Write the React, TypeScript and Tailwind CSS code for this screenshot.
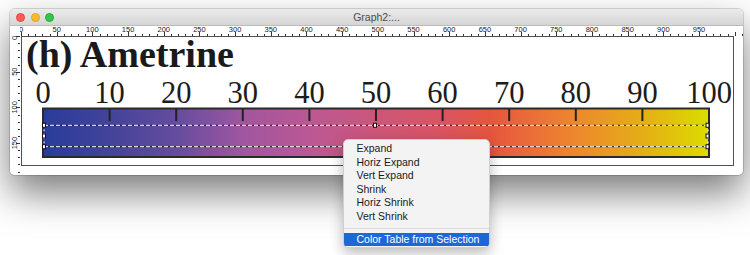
import React from "react";

const RULER_SCALE = 0.7137;

function TopRuler() {
  const minor: number[] = [];
  for (let v = 0; v <= 1010; v += 10) minor.push(v);
  const labels: number[] = [];
  for (let v = 0; v <= 950; v += 50) labels.push(v);
  return (
    <svg width={723} height={10} className="block">
      {minor.map((v) => {
        const x = 1 + v * RULER_SCALE;
        const major = v % 50 === 0;
        return (
          <rect
            key={v}
            x={Math.round(x)}
            y={major ? 6 : 8}
            width={1}
            height={major ? 4 : 2}
            fill="#333"
          />
        );
      })}
      {labels.map((v) => (
        <text
          key={v}
          x={1 + v * RULER_SCALE}
          y={6}
          textAnchor="middle"
          fontSize={7.5}
          fill="#222"
          fontFamily="Liberation Sans, Arial, sans-serif"
        >
          {v}
        </text>
      ))}
    </svg>
  );
}

function LeftRuler() {
  const minor: number[] = [];
  for (let v = 0; v <= 190; v += 10) minor.push(v);
  const labels = [0, 50, 100, 150];
  return (
    <svg width={10} height={139} className="block">
      {minor.map((v) => {
        const y = v * RULER_SCALE;
        const major = v % 50 === 0;
        return (
          <rect
            key={v}
            x={major ? 6 : 8}
            y={Math.round(y)}
            width={major ? 4 : 2}
            height={1}
            fill="#333"
          />
        );
      })}
      {labels.map((v) => {
        const y = v * RULER_SCALE + (v === 0 ? 2 : 0);
        return (
          <text
            key={v}
            x={0}
            y={0}
            transform={`translate(6.5 ${y}) rotate(-90)`}
            textAnchor="middle"
            fontSize={7.5}
            fill="#222"
            fontFamily="Liberation Sans, Arial, sans-serif"
          >
            {v}
          </text>
        );
      })}
    </svg>
  );
}

function ColorBar() {
  const x0 = 21;
  const barW = 666;
  const step = barW / 10;
  const labels = [0, 10, 20, 30, 40, 50, 60, 70, 80, 90, 100];
  const stops: [number, string][] = [
    [0, "#283c9a"],
    [0.1, "#434499"],
    [0.2, "#654c9e"],
    [0.3, "#a056a0"],
    [0.4, "#bb5894"],
    [0.5, "#cc5679"],
    [0.6, "#da5462"],
    [0.67, "#e5553e"],
    [0.72, "#e9683a"],
    [0.8, "#ed882d"],
    [0.9, "#e4ae16"],
    [1, "#dcdc00"],
  ];
  const handles: [number, number][] = [
    [22, 53.3],
    [22, 64],
    [22, 74.7],
    [353, 53.3],
    [685.5, 53.3],
    [685.5, 64],
    [685.5, 74.7],
  ];
  return (
    <svg width={710} height={92} className="block">
      <defs>
        <linearGradient id="ametrine" x1="0" y1="0" x2="1" y2="0">
          {stops.map(([o, c]) => (
            <stop key={o} offset={o} stopColor={c} />
          ))}
        </linearGradient>
      </defs>
      {labels.map((v, i) => (
        <text
          key={v}
          x={x0 + i * step}
          y={31.3}
          textAnchor="middle"
          fontSize={30.5}
          fill="#1c1c1c"
          fontFamily="Liberation Serif, Times New Roman, serif"
        >
          {v}
        </text>
      ))}
      <rect
        x={x0}
        y={36.5}
        width={barW}
        height={48.5}
        fill="url(#ametrine)"
        stroke="#2a2a2a"
        strokeWidth={2}
      />
      {labels.slice(1, 10).map((v, i) => (
        <rect
          key={v}
          x={x0 + (i + 1) * step - 1}
          y={37}
          width={2}
          height={12}
          fill="#222"
        />
      ))}
      {[53.3, 74.7].map((y) => (
        <g key={y}>
          <line x1={x0 + 1} y1={y} x2={x0 + barW - 1} y2={y} stroke="#222" strokeWidth={1} />
          <line
            x1={x0 + 1}
            y1={y}
            x2={x0 + barW - 1}
            y2={y}
            stroke="#fff"
            strokeWidth={1}
            strokeDasharray="4 2"
          />
        </g>
      ))}
      <line x1={x0 + 1} y1={53.3} x2={x0 + 1} y2={74.7} stroke="#fff" strokeWidth={1} strokeDasharray="2 2" />
      <line x1={x0 + barW - 1} y1={53.3} x2={x0 + barW - 1} y2={74.7} stroke="#fff" strokeWidth={1} strokeDasharray="2 2" />
      {handles.map(([x, y], i) => (
        <rect
          key={i}
          x={x - 1.5}
          y={y - 2}
          width={3}
          height={4}
          fill="#fff"
          stroke="#111"
          strokeWidth={1}
        />
      ))}
    </svg>
  );
}

const menuItems = ["Expand", "Horiz Expand", "Vert Expand", "Shrink", "Horiz Shrink", "Vert Shrink"];

export default function App() {
  return (
    <div className="w-[750px] h-[255px] bg-white overflow-hidden relative font-['Liberation_Sans',Arial,sans-serif]">
      <div className="pl-[10px] pt-[9px]">
        <div className="w-[733px] h-[166px] bg-white rounded-[5px] shadow-[0_18px_38px_rgba(0,0,0,0.52),0_0_0_1px_rgba(0,0,0,0.14)] overflow-hidden flex flex-col">
          <div className="h-[17px] shrink-0 bg-gradient-to-b from-[#ebebeb] to-[#d5d5d5] border-b border-[#bcbcbc] grid grid-cols-[1fr_auto_1fr] items-center">
            <div className="flex items-center gap-[5.5px] pl-[6px]">
              <span className="w-[9px] h-[9px] rounded-full bg-[#fc5b57] border border-[#e2463f]" />
              <span className="w-[9px] h-[9px] rounded-full bg-[#fdbc2f] border border-[#e0a028]" />
              <span className="w-[9px] h-[9px] rounded-full bg-[#33c748] border border-[#24a93a]" />
            </div>
            <div className="text-[10.5px] leading-none text-[#4d4d4d]">Graph2:...</div>
            <div />
          </div>
          <div className="grid grid-cols-[10px_723px] grid-rows-[10px_139px] flex-1">
            <div className="bg-white" />
            <div className="bg-white">
              <TopRuler />
            </div>
            <div className="bg-white">
              <LeftRuler />
            </div>
            <div className="bg-white">
              <div className="ml-[1px] w-[713px] h-[130px] border border-[#505050] flex flex-col">
                <div className="pl-[4px] h-[35px] leading-[35px] text-[38px] font-bold text-[#1a1a1a] font-['Liberation_Serif','Times_New_Roman',serif] whitespace-nowrap">
                  (h) Ametrine
                </div>
                <ColorBar />
              </div>
            </div>
          </div>
        </div>
      </div>

      <div className="absolute left-[343px] top-[139px] w-[147px] h-[109px] bg-[#f3f3f3] rounded-[5px] border border-[#cfcfcf] shadow-[0_5px_14px_rgba(0,0,0,0.28)] pt-[2px] flex flex-col text-[10.5px] text-[#1a1a1a] overflow-hidden">
        {menuItems.map((m) => (
          <div key={m} className="h-[13.6px] leading-[13.6px] pl-[12.5px] whitespace-nowrap">
            {m}
          </div>
        ))}
        <div className="h-[9.5px] flex items-center">
          <div className="w-full h-px bg-[#dcdcdc]" />
        </div>
        <div className="h-[12.5px] leading-[12.5px] pl-[12.5px] bg-[#1c68d8] text-white whitespace-nowrap">
          Color Table from Selection
        </div>
      </div>
    </div>
  );
}
